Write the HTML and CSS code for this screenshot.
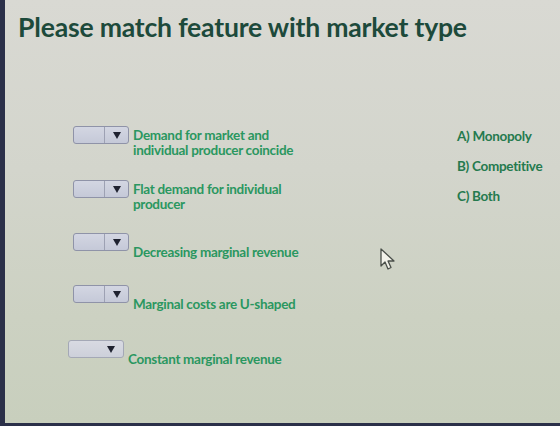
FILE: index.html
```html
<!DOCTYPE html>
<html>
<head>
<meta charset="utf-8">
<link rel="stylesheet" href="styles.css">
</head>
<body>
<div class="screen">
  <h1 class="title">Please match feature with market type</h1>
  <div class="quiz">
    <div class="features">
      <div class="row row-1">
        <div class="select"><span class="field"></span><span class="arrow"></span></div>
        <div class="label">Demand for market and<br>individual producer coincide</div>
      </div>
      <div class="row row-2">
        <div class="select"><span class="field"></span><span class="arrow"></span></div>
        <div class="label">Flat demand for individual<br>producer</div>
      </div>
      <div class="row row-3">
        <div class="select"><span class="field"></span><span class="arrow"></span></div>
        <div class="label low">Decreasing marginal revenue</div>
      </div>
      <div class="row row-4">
        <div class="select"><span class="field"></span><span class="arrow"></span></div>
        <div class="label low">Marginal costs are U-shaped</div>
      </div>
      <div class="row row-5">
        <div class="select plain"><span class="field"></span><span class="arrow"></span></div>
        <div class="label low">Constant marginal revenue</div>
      </div>
    </div>
    <ul class="options">
      <li>A) Monopoly</li>
      <li>B) Competitive</li>
      <li>C) Both</li>
    </ul>
  </div>
  <svg class="cursor" width="18" height="24" viewBox="0 0 18 24">
    <path d="M2 1 L2 18 L6 14 L9 21 L12 19.5 L9 13 L15 13 Z" fill="#f2f2ea" stroke="#4a4f4a" stroke-width="1.3" stroke-linejoin="round"/>
  </svg>
</div>
</body>
</html>
```

FILE: styles.css
```css
html, body {
  margin: 0;
  padding: 0;
  width: 560px;
  height: 426px;
  overflow: hidden;
  background: #2b3049;
}

.screen {
  position: relative;
  box-sizing: border-box;
  margin-left: 5px;
  width: 555px;
  height: 423px;
  padding: 12px 0 0 13px;
  background: linear-gradient(180deg, #d9d9d3 0%, #d3d5cc 40%, #ccd1c2 75%, #c8cfbd 100%);
  font-family: Lato, "Open Sans", sans-serif;
}

.title {
  margin: 0;
  font-size: 26.6px;
  font-weight: 700;
  line-height: 30px;
  color: #1d4a3b;
  letter-spacing: -0.2px;
}

.quiz {
  display: flex;
  margin-top: 84px;
}

.features {
  display: flex;
  flex-direction: column;
  box-sizing: border-box;
  width: 439px;
  padding-left: 55px;
  flex: none;
}

.row {
  display: flex;
  align-items: flex-start;
  gap: 4px;
  height: 54px;
}

.row-3 { margin-top: -1px; }
.row-4 { margin-top: -2px; height: 55px; }
.row-5 { margin-left: -5px; }

.select {
  display: flex;
  width: 56px;
  height: 18px;
  box-sizing: border-box;
  border: 1px solid #8f93a8;
  border-radius: 3px;
  background: linear-gradient(180deg, #d3d6e2 0%, #c5c9d8 100%);
  flex: none;
}

.select.plain {
  border-color: #a4a8b6;
  background: linear-gradient(180deg, #d8dae2 0%, #cdd0da 100%);
}

.field {
  width: 30px;
  border-right: 1px solid #9da1b3;
}

.select.plain .field { border-right: none; }

.arrow {
  flex: 1;
  display: flex;
  align-items: center;
  justify-content: center;
}

.arrow::before {
  content: "";
  border-left: 4px solid transparent;
  border-right: 4px solid transparent;
  border-top: 7px solid #1f2230;
}

.label {
  font-size: 13.5px;
  font-weight: 700;
  line-height: 14.5px;
  color: #2a9760;
  letter-spacing: -0.3px;
  margin-top: 2px;
  white-space: nowrap;
}

.label.low { margin-top: 12px; }

.options {
  list-style: none;
  margin: 3px 0 0;
  padding: 0;
  white-space: nowrap;
}

.options li {
  font-size: 13.5px;
  font-weight: 700;
  line-height: 15px;
  height: 30px;
  color: #257a4e;
  letter-spacing: -0.3px;
}

.cursor {
  position: absolute;
  left: 374px;
  top: 248px;
}
```
